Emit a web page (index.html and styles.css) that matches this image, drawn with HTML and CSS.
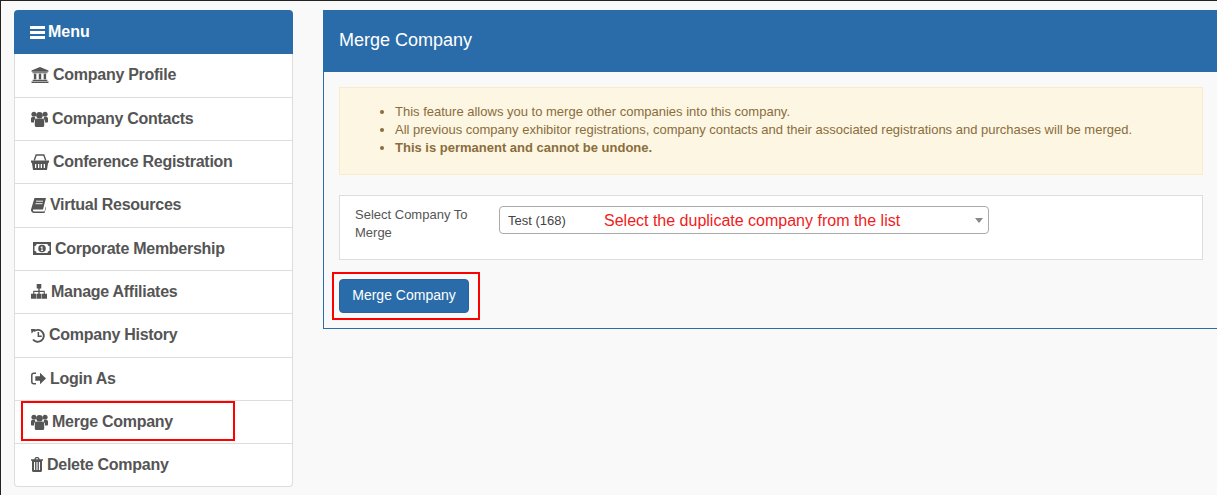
FILE: index.html
```html
<!DOCTYPE html>
<html lang="en">
<head>
<meta charset="utf-8">
<title>Merge Company</title>
<link rel="stylesheet" href="styles.css">
</head>
<body>
<div class="page">
  <aside class="menu">
    <div class="menu-head"><svg class="ic ic-bars" viewBox="0 0 15 13"><path d="M0 0h15v3H0zM0 5h15v3H0zM0 10h15v3H0z"/></svg><span>Menu</span></div>
    <ul class="menu-list">
      <li class="menu-item"><svg class="ic ic-w18" viewBox="0 0 18 17"><path d="M9 0l9 3.700V5H0V3.700zM1 5.500h16v1.200H1zM2.500 7.200h2.600v5.800H2.500zM7.700 7.200h2.600v5.800H7.700zM12.900 7.200h2.600v5.800h-2.600zM1.200 13.500h15.600v1.300H1.200zM0 15.300h18V17H0z"/></svg><span>Company Profile</span></li>
      <li class="menu-item"><svg class="ic ic-w17" viewBox="0 0 17 16"><circle cx="8.500" cy="4.300" r="3.300"/><circle cx="2.900" cy="3.300" r="2.500"/><circle cx="14.100" cy="3.300" r="2.500"/><path d="M3.800 9.500c0-1.300 1-2 2.200-2h5c1.200 0 2.200.7 2.200 2V14.500c0 .9-.6 1.500-1.400 1.500H5.200c-.8 0-1.400-.6-1.400-1.500zM0 7.500C0 6.500.7 6 1.700 6h2.100L4.500 7.500 3 9.500V11.500H.9C.3 11.500 0 11 0 10.500zM17 7.500c0-1-.7-1.500-1.700-1.500h-2.100l-.7 1.500L14 9.500v2h2.100c.6 0 .9-.5.9-1z"/></svg><span>Company Contacts</span></li>
      <li class="menu-item"><svg class="ic ic-w18" viewBox="0 0 18 16"><path fill-rule="evenodd" d="M0 6.500h18v2.300h-.9L16 16H2L.9 8.800H0zM4 10v4h1.300v-4zM7 10v4h1.300v-4zM9.700 10v4H11v-4zM12.700 10v4H14v-4z"/><path d="M3.200 6.500L5.200 1h7.600l2 5.500" fill="none" stroke="#555" stroke-width="1.400"/></svg><span>Conference Registration</span></li>
      <li class="menu-item"><svg class="ic ic-w14" viewBox="0 0 15 16"><path d="M3.500 1H15l-.4 1.500L12 12.500H3c-1 0-1.200.6-1 1.200.1.500.6.800 1.200.8h10.300L15 9l.4 1-1.900 6H3C1.300 16 0 14.600 0 13c0-.4.100-1 .3-1.500z"/><path d="M5 4.200h7M4.500 6.700h7" stroke="#fff" stroke-width=".9"/></svg><span>Virtual Resources</span></li>
      <li class="menu-item item-money"><svg class="ic ic-w18" viewBox="0 0 18 13"><path fill-rule="evenodd" d="M0 0h18v13H0zM3.500 2C3.500 3.500 2.500 4 1.500 4v5c1 0 2 .6 2 2h11c0-1.400 1-2 2-2V4c-1 0-2-.5-2-2z"/><path fill-rule="evenodd" d="M9 2.700a3.800 3.800 0 1 0 0 7.600 3.800 3.800 0 0 0 0-7.600zM8.300 4.500h1.200v3.700h.6v.8H7.900v-.8h.6V5.500l-.5.400-.5-.5z"/></svg><span>Corporate Membership</span></li>
      <li class="menu-item"><svg class="ic ic-w16" viewBox="0 0 16 15"><path d="M5.700 0h4.600v4.400H8.700v2.400H13.800v3H16v5h-5.200v-5h1.900V8H8.700v1.800h1.600v5H5.700v-5h1.600V8H3.300v1.800h1.900v5H0v-5h2.200v-3h5.100V4.400H5.700z"/></svg><span>Manage Affiliates</span></li>
      <li class="menu-item"><svg class="ic ic-w13" viewBox="0 0 14 15"><path d="M3 3.200a6 6 0 1 1-1 8.300" fill="none" stroke="#555" stroke-width="1.900"/><path d="M0 1h4.800L.6 5.600z"/><path d="M6.600 4h1.500v3.600h2.700v1.500H6.600z"/></svg><span>Company History</span></li>
      <li class="menu-item"><svg class="ic ic-w15" viewBox="0 0 15 13"><path d="M5 1.200H2.800C1.600 1.200.8 2 .8 3.200v6.600c0 1.200.8 2 2 2H5" fill="none" stroke="#555" stroke-width="1.500"/><path d="M9 .8l6 5.700-6 5.700V8.800H4.300V4.200H9z"/></svg><span>Login As</span></li>
      <li class="menu-item"><svg class="ic ic-w17" viewBox="0 0 17 16"><circle cx="8.500" cy="4.300" r="3.300"/><circle cx="2.900" cy="3.300" r="2.500"/><circle cx="14.100" cy="3.300" r="2.500"/><path d="M3.800 9.500c0-1.300 1-2 2.200-2h5c1.200 0 2.200.7 2.200 2V14.500c0 .9-.6 1.500-1.400 1.500H5.200c-.8 0-1.400-.6-1.400-1.500zM0 7.500C0 6.500.7 6 1.700 6h2.100L4.500 7.500 3 9.500V11.500H.9C.3 11.500 0 11 0 10.500zM17 7.500c0-1-.7-1.500-1.700-1.500h-2.100l-.7 1.500L14 9.500v2h2.100c.6 0 .9-.5.9-1z"/></svg><span>Merge Company</span><span class="callout callout-menu"></span></li>
      <li class="menu-item"><svg class="ic ic-w12" viewBox="0 0 12 15"><path fill-rule="evenodd" d="M0 2.300h3.200L4.200.5C4.400.200 4.800 0 5.100 0h1.800c.3 0 .7.200.9.500l1 1.800H12v1.500h-1v9.700c0 .8-.6 1.500-1.400 1.500H2.400C1.600 15 1 14.300 1 13.500V3.800H0zM4.700 2.300h2.600L6.700 1.200H5.300zM3 5v8h1.100V5zM5.450 5v8h1.100V5zM7.900 5v8H9V5z"/></svg><span>Delete Company</span></li>
    </ul>
  </aside>
  <main class="panel">
    <h1 class="panel-head">Merge Company</h1>
    <div class="panel-body">
      <div class="notice">
        <ul class="notice-list">
          <li>This feature allows you to merge other companies into this company.</li>
          <li>All previous company exhibitor registrations, company contacts and their associated registrations and purchases will be merged.</li>
          <li><strong>This is permanent and cannot be undone.</strong></li>
        </ul>
      </div>
      <div class="field-box">
        <label class="field-label">Select Company To Merge</label>
        <div class="select">
          <span class="select-value">Test (168)</span>
          <span class="select-note">Select the duplicate company from the list</span>
          <span class="select-arrow"></span>
        </div>
      </div>
      <div class="actions">
        <button class="btn" type="button">Merge Company</button>
        <span class="callout callout-btn"></span>
      </div>
    </div>
  </main>
</div>
</body>
</html>
```

FILE: styles.css
```css
* { box-sizing: border-box; }
html, body { margin: 0; height: 100%; }
body {
  background: #f9f9f9;
  font-family: "Liberation Sans", Arial, sans-serif;
  color: #555;
  overflow: hidden;
  border-top: 1px solid #222;
  border-left: 1px solid #222;
}
.page {
  display: flex;
  align-items: flex-start;
  gap: 30px;
  padding: 9px 0 0 13px;
  width: 1218px;
}
.menu { width: 279px; flex: none; }
.menu-head {
  height: 44px;
  background: #2a6ca9;
  border-radius: 4px 4px 0 0;
  color: #fff;
  font-weight: bold;
  font-size: 16px;
  display: flex;
  align-items: center;
  gap: 3px;
  padding: 0 16px;
}
.menu-list {
  list-style: none;
  margin: 0;
  padding: 0.5px 0 0;
  background: #fff;
  border: 1px solid #ddd;
  border-top: 0;
  border-radius: 0 0 4px 4px;
}
.menu-item {
  position: relative;
  height: 43.3px;
  display: flex;
  align-items: center;
  gap: 4px;
  padding: 0 0 0.4px 16px;
  font-size: 16px;
  letter-spacing: -0.27px;
  font-weight: bold;
  color: #555;
  border-bottom: 1px solid #ddd;
}
.menu-item:last-child { border-bottom: 0; height: 42px; }
.item-money { padding-left: 18px; }
.ic { fill: #555; flex: none; display: block; }
.ic-bars { fill: #fff; width: 15px; height: 13px; }
.ic-w18 { width: 18px; height: 16px; }
.ic-w17 { width: 17px; height: 16px; }
.ic-w16 { width: 16px; height: 15px; }
.ic-w15 { width: 15px; height: 13px; }
.ic-w14 { width: 15px; height: 16px; }
.ic-w13 { width: 14px; height: 15px; }
.ic-w12 { width: 12px; height: 15px; }
.item-money .ic { height: 13px; }
.callout {
  position: absolute;
  border: 2px solid #f00;
  pointer-events: none;
}
.callout-menu { left: 6px; top: 0; width: 214px; height: 40px; }
.panel {
  flex: none;
  width: 896px;
  height: 319px;
  border: 1px solid #2a6ca9;
  border-top: 0;
  background: #f9f9f9;
}
.panel-head {
  margin: 0 -1px;
  height: 62px;
  background: #2a6ca9;
  color: #fff;
  font-size: 18px;
  font-weight: normal;
  padding: 0 16px 2px;
  display: flex;
  align-items: center;
}
.panel-body { padding: 15px 15px 0; }
.notice {
  height: 88px;
  background: #fcf6e3;
  border: 1px solid #faebcc;
  color: #8a6d3b;
  font-size: 13px;
  display: flex;
  align-items: center;
  padding-bottom: 2px;
}
.notice-list { margin: 0; padding: 0 0 0 55px; line-height: 18px; }
.field-box {
  margin-top: 20px;
  height: 65px;
  background: #fff;
  border: 1px solid #ddd;
  display: flex;
  padding: 10px 15px 0;
}
.field-label {
  width: 144px;
  padding-right: 20px;
  font-size: 13px;
  line-height: 18px;
  color: #555;
  flex: none;
}
.select {
  position: relative;
  width: 490px;
  height: 28px;
  background: #fff;
  border: 1px solid #aaa;
  border-radius: 4px;
  display: flex;
  align-items: center;
  padding: 1px 0 0 8px;
  font-size: 13px;
  color: #444;
}
.select-value { width: 96px; flex: none; }
.select-note { color: #f01c1c; font-size: 16px; }
.select-arrow {
  position: absolute;
  right: 5px;
  top: 11px;
  border-top: 5px solid #888;
  border-left: 4px solid transparent;
  border-right: 4px solid transparent;
}
.actions { position: relative; margin-top: 19px; }
.btn {
  display: block;
  width: 130px;
  height: 34px;
  background: #2a6ca9;
  border: 1px solid #2a64a0;
  border-radius: 4px;
  color: #fff;
  font: 14px "Liberation Sans", Arial, sans-serif;
  padding: 0 0 2px;
}
.callout-btn { left: -7px; top: -7px; width: 148px; height: 48px; }
```
